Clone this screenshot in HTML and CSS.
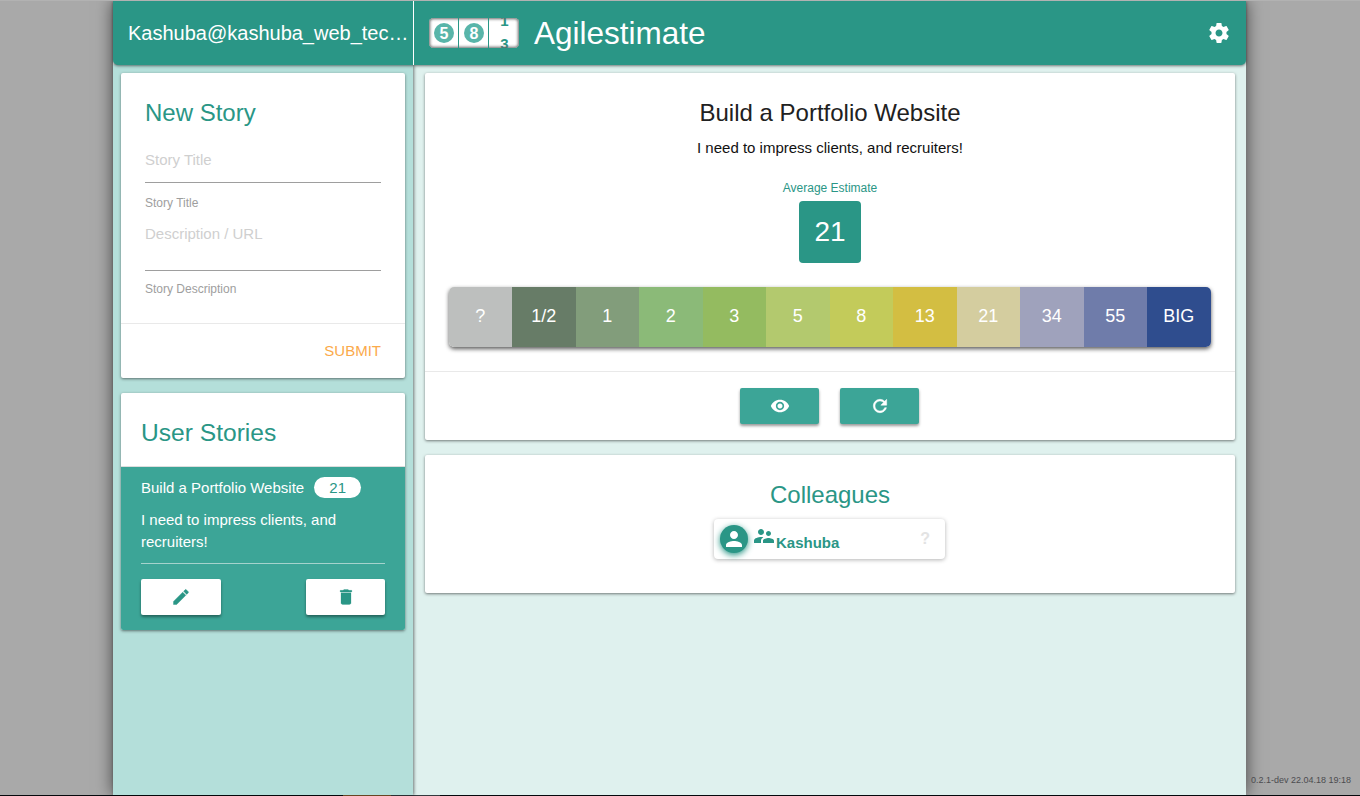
FILE: index.html
```html
<!DOCTYPE html>
<html lang="en">
<head>
<meta charset="utf-8">
<title>Agilestimate</title>
<link rel="stylesheet" href="styles.css">
</head>
<body>
<div class="app">
  <header class="topbar">
    <div class="room">Kashuba@kashuba_web_tec…</div>
    <div class="brand">
      <svg class="logo" width="90" height="30" viewBox="0 0 90 30">
        <defs>
          <clipPath id="reel"><rect width="90" height="30" rx="4.5"/></clipPath>
          <filter id="soft"><feGaussianBlur stdDeviation="1.8"/></filter>
        </defs>
        <g clip-path="url(#reel)">
          <rect width="90" height="30" fill="#fff"/>
          <text x="75.500" y="7.500" class="reel-digit">1</text>
          <text x="75.500" y="31" class="reel-digit">3</text>
          <rect x="-1" y="-1" width="92" height="32" rx="5" fill="none" stroke="#666" stroke-width="4" filter="url(#soft)"/>
          <path d="M29.500 0v30M59.500 0v30" stroke="#2a9686"/>
          <circle cx="15" cy="15" r="10" fill="#58b5a9"/>
          <circle cx="45" cy="15" r="10" fill="#58b5a9"/>
          <text x="15" y="20.500" class="reel-digit reel-face">5</text>
          <text x="45" y="20.500" class="reel-digit reel-face">8</text>
        </g>
      </svg>
      <h1>Agilestimate</h1>
      <svg class="gear" width="24" height="24" viewBox="0 0 24 24" fill="#fff"><path d="M19.430 12.980c.04-.32.07-.64.07-.98s-.03-.66-.07-.98l2.110-1.650c.19-.15.24-.42.12-.64l-2-3.460c-.12-.22-.39-.3-.61-.22l-2.490 1c-.52-.4-1.080-.73-1.690-.98l-.38-2.650C14.460 2.180 14.250 2 14 2h-4c-.25 0-.46.18-.49.42l-.38 2.650c-.61.25-1.170.59-1.690.98l-2.490-1c-.23-.09-.49 0-.61.22l-2 3.460c-.13.22-.07.49.12.64l2.110 1.650c-.04.32-.07.65-.07.98s.03.66.07.98l-2.110 1.650c-.19.15-.24.42-.12.64l2 3.460c.12.22.39.3.61.22l2.490-1c.52.4 1.080.73 1.690.98l.38 2.650c.03.24.24.42.49.42h4c.25 0 .46-.18.49-.42l.38-2.650c.61-.25 1.170-.59 1.690-.98l2.490 1c.23.09.49 0 .61-.22l2-3.460c.12-.22.07-.49-.12-.64l-2.110-1.650zM12 15.500c-1.930 0-3.500-1.570-3.500-3.500s1.570-3.500 3.500-3.500 3.500 1.570 3.500 3.500-1.570 3.500-3.500 3.500z"/></svg>
    </div>
  </header>
  <div class="columns">
    <aside class="sidebar">
      <form class="card new-story">
        <h2>New Story</h2>
        <div class="field title-field">Story Title</div>
        <label>Story Title</label>
        <div class="field text-field">Description / URL</div>
        <label class="text-label">Story Description</label>
        <div class="form-action">SUBMIT</div>
      </form>
      <section class="card stories">
        <h2>User Stories</h2>
        <article class="story">
          <div class="story-head">Build a Portfolio Website <span class="badge">21</span></div>
          <p>I need to impress clients, and recruiters!</p>
          <div class="story-actions">
            <div class="btn light"><svg width="20" height="20" viewBox="0 0 24 24"><path stroke="#2a9686" stroke-width=".5" d="M3 17.250V21h3.750L17.810 9.940l-3.750-3.750L3 17.250zM20.710 7.040c.39-.39.39-1.020 0-1.410l-2.340-2.340c-.39-.39-1.020-.39-1.410 0l-1.830 1.830 3.750 3.750 1.830-1.830z"/></svg></div>
            <div class="btn light narrow"><svg width="20" height="20" viewBox="0 0 24 24"><path stroke="#2a9686" stroke-width=".3" d="M6 19c0 1.100.9 2 2 2h8c1.100 0 2-.9 2-2V7H6v12zM19 4h-3.500l-1-1h-5l-1 1H5v2h14V4z"/></svg></div>
          </div>
        </article>
      </section>
    </aside>
    <main class="board">
      <section class="card current">
        <h2>Build a Portfolio Website</h2>
        <p class="summary">I need to impress clients, and recruiters!</p>
        <div class="avg-label">Average Estimate</div>
        <div class="avg">21</div>
        <div class="scale">
          <div class="c0">?</div><div class="c1">1/2</div><div class="c2">1</div><div class="c3">2</div><div class="c4">3</div><div class="c5">5</div><div class="c6">8</div><div class="c7">13</div><div class="c8">21</div><div class="c9">34</div><div class="c10">55</div><div class="c11">BIG</div>
        </div>
        <div class="controls">
          <div class="btn"><svg width="20" height="20" viewBox="0 0 24 24"><path d="M12 4.500C7 4.500 2.730 7.610 1 12c1.730 4.390 6 7.500 11 7.500s9.270-3.110 11-7.500c-1.730-4.390-6-7.500-11-7.500zM12 17c-2.760 0-5-2.240-5-5s2.240-5 5-5 5 2.240 5 5-2.240 5-5 5zm0-8c-1.660 0-3 1.340-3 3s1.340 3 3 3 3-1.340 3-3-1.340-3-3-3z"/></svg></div>
          <div class="btn"><svg width="20" height="20" viewBox="0 0 24 24"><path stroke="#fff" stroke-width=".6" d="M17.650 6.350C16.200 4.900 14.210 4 12 4c-4.420 0-7.990 3.580-7.990 8s3.570 8 7.990 8c3.730 0 6.840-2.550 7.730-6h-2.080c-.82 2.330-3.040 4-5.650 4-3.310 0-6-2.690-6-6s2.690-6 6-6c1.660 0 3.140.69 4.220 1.780L13 11h7V4l-2.350 2.350z"/></svg></div>
        </div>
      </section>
      <section class="card colleagues">
        <h2>Colleagues</h2>
        <div class="person">
          <span class="avatar"><svg width="24" height="24" viewBox="0 0 24 24" fill="#fff"><path d="M12 12c2.210 0 4-1.790 4-4s-1.790-4-4-4-4 1.790-4 4 1.790 4 4 4zm0 2c-2.670 0-8 1.340-8 4v2h16v-2c0-2.660-5.330-4-8-4z"/></svg></span>
          <svg class="group" width="24" height="24" viewBox="0 0 24 24" fill="#2a9686"><path d="M16.500 12c1.380 0 2.490-1.120 2.490-2.500S17.880 7 16.500 7C15.120 7 14 8.120 14 9.500s1.120 2.500 2.500 2.500zM9 11c1.660 0 2.990-1.340 2.990-3S10.660 5 9 5C7.340 5 6 6.340 6 8s1.340 3 3 3zm7.500 3c-1.830 0-5.500.92-5.500 2.750V19h11v-2.250c0-1.830-3.670-2.750-5.500-2.750zM9 13c-2.330 0-7 1.170-7 3.500V19h7v-2.250c0-.85.33-2.340 2.370-3.470C10.500 13.100 9.660 13 9 13z"/></svg>
          <b class="name">Kashuba</b>
          <b class="vote">?</b>
        </div>
      </section>
    </main>
  </div>
</div>
<div class="version">0.2.1-dev 22.04.18 19:18</div>
<div class="taskbar"><i></i><u></u></div>
</body>
</html>
```
FILE: styles.css
```css
* { box-sizing: border-box; }
body {
  margin: 0;
  height: 796px;
  overflow: hidden;
  background: #a9a9a9;
  border-top: 1px solid #b2b2b2;
  font: 15px/22px "Liberation Sans", Arial, sans-serif;
  color: #212121;
}
h1, h2, p { margin: 0; font-weight: 400; }
svg { display: block; flex: none; }
.app {
  width: 1133px;
  height: 794px;
  margin-left: 113px;
  display: flex;
  flex-direction: column;
  background: #dff1ee;
  box-shadow: 0 0 16px rgba(0,0,0,.6);
}
.topbar {
  position: relative;
  z-index: 2;
  flex: none;
  height: 64px;
  display: flex;
  background: #2a9686;
  color: #fff;
  border-radius: 0 0 5px 5px;
  box-shadow: 0 1px 3px rgba(0,0,0,.5);
}
.room {
  width: 301px;
  padding-left: 15px;
  border-right: 1px solid #fff;
  font-size: 20px;
  line-height: 64px;
  white-space: nowrap;
}
.brand { flex: 1; display: flex; align-items: center; padding: 0 15px; }
.brand h1 { margin-left: 15px; font-size: 31.5px; line-height: 64px; }
.gear { margin-left: auto; }
.reel-digit { font: bold 15px "Liberation Sans", Arial, sans-serif; text-anchor: middle; fill: #2a9686; }
.reel-digit.reel-face { fill: #fff; font-size: 16px; }
.columns { flex: 1; display: flex; }
.sidebar {
  position: relative;
  width: 300px;
  padding: 8px;
  background: #b4dfda;
  box-shadow: 1px 0 3px rgba(0,0,0,.5);
}
.board { flex: 1; padding: 8px 11px 8px 12px; }
.card {
  display: block;
  margin-bottom: 15px;
  background: #fff;
  border-radius: 2px;
  box-shadow: 0 1px 3px rgba(0,0,0,.5);
  overflow: hidden;
}
h2 { font-size: 24px; line-height: 32px; color: #2a9686; }
.new-story { height: 305px; padding: 24px 24px 0; }
.field { color: #cfcfcf; border-bottom: 1px solid #9e9e9e; }
.title-field { height: 54px; padding-top: 20px; }
.text-field { height: 62px; padding-top: 14px; }
label { display: block; height: 26px; padding-top: 8px; font-size: 12px; line-height: 24px; color: #9e9e9e; }
.text-label { padding-top: 6px; }
.form-action {
  margin: 26px -24px 0;
  padding: 16px 24px;
  border-top: 1px solid #e9e9e9;
  text-align: right;
  color: #fbaa4b;
}
.stories { height: 237px; }
.stories h2 { height: 74px; padding: 24px 20px 0; font-size: 24.6px; border-bottom: 1px solid #ddd; }
.story { height: 163px; padding: 10px 20px 0; background: #3ca597; color: #fff; }
.story-head { display: flex; align-items: flex-start; height: 22px; }
.badge { width: 47px; margin-left: 10px; border-radius: 11px; background: #fff; color: #2a9686; line-height: 21px; text-align: center; }
.story p { margin-top: 10px; height: 55px; border-bottom: 1px solid #a5d3cd; }
.story-actions { display: flex; justify-content: space-between; padding-top: 15px; }
.btn {
  width: 79px;
  height: 36px;
  display: flex;
  align-items: center;
  justify-content: center;
  border-radius: 2px;
  background: #3ca597;
  fill: #fff;
  box-shadow: 0 2px 3px rgba(0,0,0,.4);
}
.btn.light { width: 80px; background: #fff; fill: #2a9686; }
.btn.narrow { width: 79px; }
.current { height: 367px; padding-top: 24px; text-align: center; }
.current h2 { color: #212121; }
.summary { margin-top: 8px; color: #111; }
.avg-label { margin-top: 18px; font-size: 12px; color: #2a9686; }
.avg { width: 62px; height: 62px; margin: 2px auto 24px; border-radius: 4px; background: #2a9686; color: #fff; font-size: 28px; line-height: 61px; }
.scale {
  display: grid;
  grid-template-columns: repeat(12, 1fr);
  width: 762px;
  height: 60px;
  margin-left: 23.5px;
  border-radius: 5px;
  overflow: hidden;
  color: #fff;
  font-size: 18px;
  line-height: 58px;
  box-shadow: 0 2px 4px rgba(0,0,0,.65);
}
.c0 { background: #bdbfbe; }
.c1 { background: #677c67; }
.c2 { background: #829d7b; }
.c3 { background: #8bba78; }
.c4 { background: #94bb60; }
.c5 { background: #b3c96e; }
.c6 { background: #c3cb5a; }
.c7 { background: #d3be42; }
.c8 { background: #d4cd9f; }
.c9 { background: #9fa2bc; }
.c10 { background: #6f7caa; }
.c11 { background: #2f4d8e; }
.controls { display: flex; justify-content: center; gap: 21px; margin-top: 24px; padding: 16px 1px 0 0; border-top: 1px solid #e9e9e9; }
.colleagues { height: 138px; padding-top: 24px; text-align: center; }
.person {
  display: flex;
  width: 231px;
  height: 40px;
  margin: 8px 0 0 289px;
  padding: 5px 6px;
  border-radius: 4px;
  box-shadow: 0 1px 4px rgba(0,0,0,.3);
}
.avatar { display: flex; align-items: center; justify-content: center; width: 28px; height: 28px; margin-top: 1px; border-radius: 50%; background: #2a9686; box-shadow: 0 2px 6px #2a9686; }
.group { margin-left: 4px; }
.name { color: #2a9686; padding-top: 8px; }
.vote { margin-left: auto; padding: 4px 9px 0 0; font-size: 16px; color: #e3e3e3; }
.version { position: absolute; left: 1251px; top: 774px; font-size: 9px; line-height: 12px; color: #4c4c50; white-space: nowrap; }
.taskbar { height: 1px; display: flex; background: #05080c; }
.taskbar i { width: 48px; margin-left: 343px; background: #80562c; }
.taskbar u { width: 49px; background: #34393d; }
```
